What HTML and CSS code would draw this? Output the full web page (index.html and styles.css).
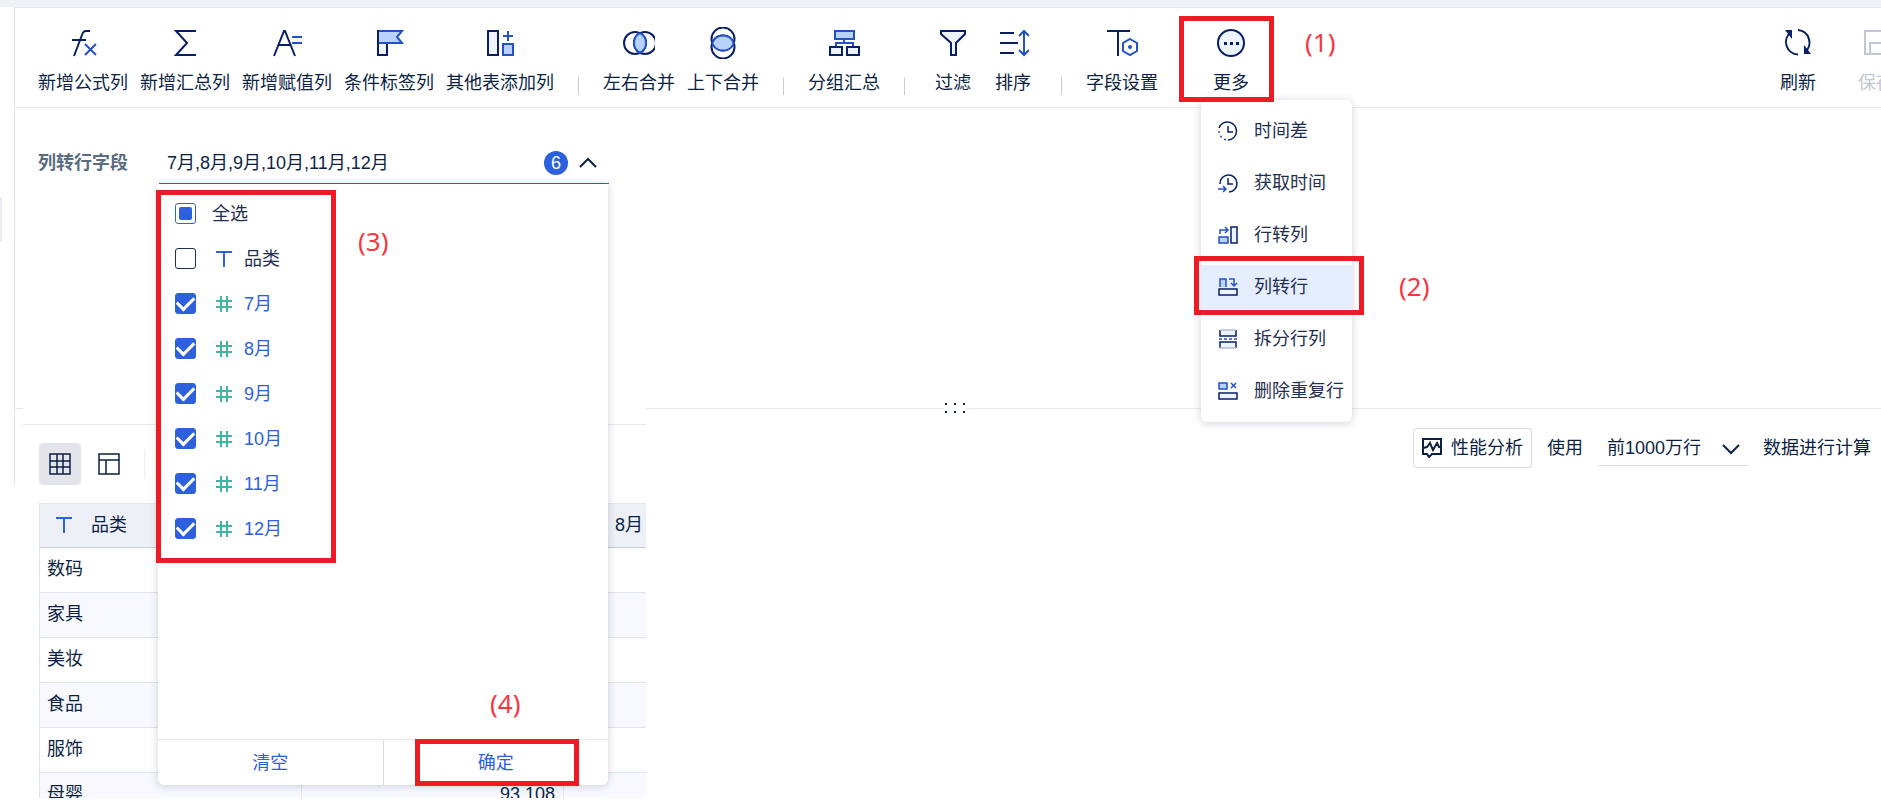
FILE: index.html
```
<!DOCTYPE html>
<html lang="zh-CN">

<head>
    <meta charset="UTF-8" />
    <meta name="viewport" content="width=device-width, initial-scale=1.0" />
    <title>列转行</title>
    <link rel="stylesheet" href="styles.css">
</head>

<body>
    <!-- Shared field type icons -->
    <svg class="sprite" aria-hidden="true">
        <symbol id="type-text" viewBox="0 0 18 18"><path d="M1 2h16M9 2v15" fill="none" stroke="#2d60dc" stroke-width="2" /></symbol>
        <symbol id="type-number" viewBox="0 0 18 18"><path d="M1 6h16M1 12h16M6 1v16M12 1v16" fill="none" stroke="#3fb5a3" stroke-width="2" /></symbol>
    </svg>

    <div class="page">
        <div class="side-handle"></div>
        <header class="toolbar">
            <button class="tool">
                <svg viewBox="0 0 32 32"><path d="M23 4h-4q-3 0-4 4L7 29M5 13h14" /><path class="blue" d="M18 17l11 11M29 17L18 28" /></svg>
                <span>新增公式列</span>
            </button>
            <button class="tool">
                <svg viewBox="0 0 32 32"><path d="M27 4H7l11 12L7 28h20" /></svg>
                <span>新增汇总列</span>
            </button>
            <button class="tool">
                <svg viewBox="0 0 32 32"><path d="M3 29L13 4h1l10 25M7 18h13" /><path class="blue" d="M21 10h10M21 16h10" /></svg>
                <span>新增赋值列</span>
            </button>
            <button class="tool">
                <svg viewBox="0 0 32 32"><path class="pale" d="M5 15v13h9V15" /><path class="blue fill" d="M5 4h24l-5 6 5 6H5z" /><path d="M5 3v25" /></svg>
                <span>条件标签列</span>
            </button>
            <button class="tool">
                <svg viewBox="0 0 32 32"><path class="pale" d="M4 4h10v24H4z" /><path class="blue" d="M24 4v10M19 9h10" /><path class="blue fill" d="M19 17h10v11H19z" /></svg>
                <span>其他表添加列</span>
            </button>
            <i class="sep"></i>
            <button class="tool">
                <svg viewBox="0 0 32 32"><circle cx="12" cy="16" r="11" /><circle cx="22" cy="16" r="11" /><path class="blue fill" d="M17 6.200a11 11 0 0 1 0 19.600a11 11 0 0 1 0-19.600z" /></svg>
                <span>左右合并</span>
            </button>
            <button class="tool">
                <svg viewBox="0 0 32 32"><circle cx="16" cy="12" r="11.500" /><circle cx="16" cy="20" r="11.500" /><path class="blue fill" d="M5.200 16a11.500 11.500 0 0 1 21.600 0a11.500 11.500 0 0 1-21.600 0z" /></svg>
                <span>上下合并</span>
            </button>
            <i class="sep"></i>
            <button class="tool">
                <svg viewBox="0 0 32 32"><path class="blue fill" d="M7 4h19v8H7z" /><path class="blue" d="M16 12v4M8 20v-4h17v4" /><path class="pale" d="M2 20h12v8H2zM19 20h12v8H19z" /></svg>
                <span>分组汇总</span>
            </button>
            <i class="sep"></i>
            <button class="tool">
                <svg viewBox="0 0 32 32"><path class="pale" d="M4 4h24v3l-9 9v12h-5V16L4 7z" /></svg>
                <span>过滤</span>
            </button>
            <button class="tool">
                <svg viewBox="0 0 32 32"><path d="M3 6h14M3 16h18M3 26h14" /><path class="blue" d="M27 4v24M22 9l5-5 5 5M22 23l5 5 5-5" /></svg>
                <span>排序</span>
            </button>
            <i class="sep"></i>
            <button class="tool">
                <svg viewBox="0 0 32 32"><path d="M1 4h23M12 4v25" /><path class="blue" d="M24 12l7 4v8l-7 4-7-4v-8z" /><circle class="blue-dot" cx="24" cy="20" r="2" /></svg>
                <span>字段设置</span>
            </button>
            <i class="sep"></i>

            <div class="more">
                <button class="tool">
                    <svg viewBox="0 0 32 32"><circle class="pale" cx="16" cy="16" r="13" /><path class="solid" d="M9 15h3v3H9zM15 15h3v3h-3zM21 15h3v3h-3z" /></svg>
                    <span>更多</span>
                </button>
                <div class="menu">
                    <button class="menu-item">
                        <svg viewBox="0 0 20 20"><path d="M1 7A9 9 0 1 1 10 19M10 5v6h5" /><path class="blue dots" d="M1 10A9 9 0 0 0 10 19" /></svg>
                        时间差
                    </button>
                    <button class="menu-item">
                        <svg viewBox="0 0 20 20"><path d="M2 11A8.500 8.500 0 1 1 11 19M10 5v6h5" /><path class="blue" d="M0 16h8M5 13l3 3-3 3" /></svg>
                        获取时间
                    </button>
                    <button class="menu-item">
                        <svg viewBox="0 0 20 20"><path class="blue fill" d="M1 12h9v6H1z" /><path class="blue" d="M2 9V5h8M7 2l3 3-3 3" /><path class="pale" d="M13 2h6v16h-6z" /></svg>
                        行转列
                    </button>
                    <button class="menu-item active">
                        <svg viewBox="0 0 20 20"><path class="blue fill" d="M2 10V2h6v8" /><path class="blue" d="M11 2h5v7M13 6l3 3 3-3" /><path class="pale" d="M1 12h18v6H1z" /></svg>
                        列转行
                    </button>
                    <button class="menu-item">
                        <svg viewBox="0 0 20 20"><path class="pale" d="M2 1v6h16V1M2 19v-6h16v6" /><path class="faint" d="M2 1h16M2 19h16" /><path class="blue dash" d="M1 10h18" /></svg>
                        拆分行列
                    </button>
                    <button class="menu-item">
                        <svg viewBox="0 0 20 20"><path class="blue fill" d="M1 2h8v6H1z" /><path class="blue" d="M13 2l5 5M18 2l-5 5" /><path class="pale" d="M1 12h18v6H1z" /></svg>
                        删除重复行
                    </button>
                </div>
                <div class="mark mark-more"></div>
                <div class="mark mark-menu"></div>
                <span class="step step-1">(1)</span>
                <span class="step step-2">(2)</span>
            </div>

            <div class="tools-right">
                <button class="tool">
                    <svg viewBox="0 0 32 32"><path d="M16 3A12.500 12.500 0 0 1 23 25M16 27.500A12.500 12.500 0 0 1 9 5" /><path class="solid" d="M22 18v9h7zM10 12V3H3z" /></svg>
                    <span>刷新</span>
                </button>
                <button class="tool" disabled>
                    <svg viewBox="0 0 32 32"><path d="M5 4h19l4 4v19H5zM10 27V16h13v11" /></svg>
                    <span>保存</span>
                </button>
            </div>
        </header>

        <section class="config">
            <span class="config-label" id="fieldLabel">列转行字段</span>
            <div class="combo">
                <button class="combo-value" aria-labelledby="fieldLabel">
                    <span class="combo-text">7月,8月,9月,10月,11月,12月</span>
                    <span class="badge">6</span>
                    <svg class="chevron" viewBox="0 0 18 18"><path d="M1 13l8-8 8 8" /></svg>
                </button>

                <div class="dropdown">
                    <div class="options">
                        <label class="option all"><input type="checkbox" class="partial"><span>全选</span></label>
                        <label class="option"><input type="checkbox"><svg><use href="#type-text" /></svg><span>品类</span></label>
                        <label class="option"><input type="checkbox" checked><svg><use href="#type-number" /></svg><span>7月</span></label>
                        <label class="option"><input type="checkbox" checked><svg><use href="#type-number" /></svg><span>8月</span></label>
                        <label class="option"><input type="checkbox" checked><svg><use href="#type-number" /></svg><span>9月</span></label>
                        <label class="option"><input type="checkbox" checked><svg><use href="#type-number" /></svg><span>10月</span></label>
                        <label class="option"><input type="checkbox" checked><svg><use href="#type-number" /></svg><span>11月</span></label>
                        <label class="option"><input type="checkbox" checked><svg><use href="#type-number" /></svg><span>12月</span></label>
                    </div>
                    <div class="dropdown-footer">
                        <button>清空</button>
                        <button>确定</button>
                    </div>
                    <div class="mark mark-options"></div>
                    <div class="mark mark-confirm"></div>
                    <span class="step step-3">(3)</span>
                    <span class="step step-4">(4)</span>
                </div>
            </div>
            <svg class="grip" viewBox="0 0 22 12"><path d="M1 1h2v2H1zM10 1h2v2h-2zM19 1h2v2h-2zM1 9h2v2H1zM10 9h2v2h-2zM19 9h2v2h-2z" /></svg>
        </section>

        <main class="result">
            <div class="rail"></div>
            <section class="preview">
                <div class="views">
                    <button class="view active" aria-label="表格">
                        <svg viewBox="0 0 22 22"><path d="M1 1h20v20H1zM1 8h20M1 14h20M8 1v20M14 1v20" /></svg>
                    </button>
                    <button class="view" aria-label="布局">
                        <svg viewBox="0 0 22 22"><path d="M1 1h20v20H1zM1 7h20M8 7v14" /></svg>
                    </button>
                    <i class="view-sep"></i>
                </div>
                <div class="table-wrap">
                    <table>
                        <thead>
                            <tr>
                                <th><span class="th"><svg><use href="#type-text" /></svg>品类</span></th>
                                <th></th>
                                <th><span class="th"><svg><use href="#type-number" /></svg>8月</span></th>
                            </tr>
                        </thead>
                        <tbody>
                            <tr><td>数码</td><td></td><td></td></tr>
                            <tr><td>家具</td><td></td><td></td></tr>
                            <tr><td>美妆</td><td></td><td></td></tr>
                            <tr><td>食品</td><td></td><td></td></tr>
                            <tr><td>服饰</td><td></td><td></td></tr>
                            <tr><td>母婴</td><td class="num">93,108</td><td></td></tr>
                        </tbody>
                    </table>
                </div>
            </section>

            <div class="calc">
                <button class="analyse">
                    <svg viewBox="0 0 20 20"><path d="M1 1h18v15h-9l-3 3-2-3H1zM1 10l4-1 3-4 3 7 4-7 2 4h2" /></svg>
                    性能分析
                </button>
                <label for="rows">使用</label>
                <div class="rows">
                    <select id="rows">
                        <option>前1000万行</option>
                    </select>
                    <svg class="chevron" viewBox="0 0 18 18"><path d="M1 5l8 8 8-8" /></svg>
                </div>
                <span>数据进行计算</span>
            </div>
        </main>
    </div>
</body>

</html>
```
FILE: styles.css
```
* {
    box-sizing: border-box;
    margin: 0;
    padding: 0;
}

body {
    font-family: 'Liberation Sans', 'Noto Sans CJK SC', sans-serif;
    font-size: 18px;
    line-height: 24px;
    color: #0c1f45;
    background: #fff;
    overflow: hidden;
}

button,
select {
    font: inherit;
    color: inherit;
    background: none;
    border: none;
    cursor: pointer;
}

svg {
    display: block;
    flex: none;
    fill: none;
    stroke: #081f66;
    stroke-width: 2;
}

.sprite {
    position: absolute;
    width: 0;
    height: 0;
}

.page {
    position: relative;
    padding-left: 14px;
    border-top: 7px solid #edf0f5;
}

/* collapsed side panel */
.side-handle {
    position: absolute;
    left: 0;
    top: 190px;
    width: 2px;
    height: 45px;
    background: #e9ecf2;
}

/* icon colours */
.blue {
    stroke: #2252c5;
}

.fill {
    fill: #b9d2fb;
}

.pale {
    fill: #eef4fe;
}

.solid {
    fill: #081f66;
    stroke: none;
}

.blue-dot {
    fill: #2252c5;
    stroke: none;
}

.faint {
    stroke: #b4c0d9;
}

.dots {
    stroke-dasharray: 2 3;
}

.dash {
    stroke-dasharray: 3 2;
}

/* Toolbar */
.toolbar {
    display: flex;
    gap: 12px;
    padding: 19px 0 12px 23px;
    border: 1px solid #e5e6ee;
    border-right: none;
}

.tool {
    display: flex;
    flex-direction: column;
    align-items: center;
    gap: 12px;
    min-width: 48px;
    white-space: nowrap;
}

.tool svg {
    width: 32px;
    height: 32px;
}

.tool:disabled {
    color: #c3c7d2;
}

.tool:disabled svg {
    stroke: #c3c7d2;
}

.sep {
    align-self: flex-end;
    width: 1px;
    height: 18px;
    margin: 0 12px;
    background: #c9cdd8;
}

.tools-right {
    display: flex;
    gap: 30px;
    margin-left: auto;
    margin-right: -19px;
}

/* More menu */
.more {
    position: relative;
}

.menu {
    position: absolute;
    z-index: 2;
    left: -6px;
    top: 73px;
    display: flex;
    flex-direction: column;
    gap: 8px;
    width: 151px;
    padding: 9px 0;
    border-radius: 6px;
    background: #fff;
    box-shadow: 0 1px 8px rgba(20, 35, 70, 0.2);
}

.menu-item {
    display: flex;
    align-items: center;
    gap: 16px;
    height: 44px;
    padding-left: 17px;
    color: #1f2f50;
    white-space: nowrap;
}

.menu-item svg {
    width: 20px;
    height: 20px;
    stroke-width: 1.5;
}

.menu-item.active {
    background: #e5eeff;
}

/* Step marks */
.mark {
    position: absolute;
    z-index: 3;
    border: 5px solid #ed1c24;
    pointer-events: none;
}

.mark-more {
    left: -28px;
    top: -11px;
    width: 95px;
    height: 86px;
}

.mark-menu {
    left: -13px;
    top: 229px;
    width: 170px;
    height: 59px;
}

.mark-options {
    left: -2px;
    top: 6px;
    width: 180px;
    height: 373px;
}

.mark-confirm {
    right: 29px;
    bottom: -1px;
    width: 164px;
    height: 47px;
}

.step {
    position: absolute;
    z-index: 3;
    font-family: 'Noto Sans', sans-serif;
    font-size: 26px;
    color: #f5373f;
}

.step-1 {
    left: 98px;
    top: 3px;
}

.step-2 {
    left: 192px;
    top: 247px;
}

.step-3 {
    left: 200px;
    top: 45px;
}

.step-4 {
    left: 332px;
    top: 507px;
}

/* Field selection */
.config {
    position: relative;
    display: flex;
    align-items: flex-start;
    gap: 31px;
    min-height: 301px;
    padding: 35px 0 0 23px;
    border-left: 1px solid #e5e6ee;
    border-bottom: 1px solid #e5e6ee;
}

.config-label {
    line-height: 40px;
    font-weight: bold;
    color: #5b6b82;
}

.combo {
    position: relative;
    width: 450px;
}

.combo-value {
    display: flex;
    align-items: center;
    width: 100%;
    height: 41px;
    padding: 0 12px 0 8px;
    border-bottom: 1px solid #2d60dc;
}

.combo-text {
    flex: 1;
    text-align: left;
}

.badge {
    width: 24px;
    margin-right: 11px;
    border-radius: 12px;
    background: #2d60dc;
    color: #fff;
}

.chevron {
    width: 18px;
    height: 18px;
    stroke: #0c1f45;
}

.dropdown {
    position: absolute;
    z-index: 2;
    top: 41px;
    left: -1px;
    width: 100%;
    border-radius: 0 0 6px 6px;
    background: #fff;
    box-shadow: 0 1px 8px rgba(20, 35, 70, 0.2);
}

.options {
    min-height: 555px;
    padding: 7px 0 0 17px;
}

.option {
    display: flex;
    align-items: center;
    gap: 19px;
    height: 45px;
}

.option span {
    margin-left: -8px;
    color: #2d60dc;
}

.option svg {
    width: 18px;
    height: 18px;
}

.option input {
    appearance: none;
    display: grid;
    place-items: center;
    width: 21px;
    height: 21px;
    border: 1px solid #1f2f50;
    border-radius: 3px;
}

.option input:checked {
    border-color: #2d60dc;
    background: #2d60dc;
}

.option input:checked::after {
    content: '';
    width: 14px;
    height: 8px;
    margin-bottom: 4px;
    border: solid #fff;
    border-width: 0 0 3px 3px;
    transform: rotate(-45deg);
}

.option input.partial {
    border-color: #2d60dc;
}

.option input.partial::after {
    content: '';
    width: 13px;
    height: 13px;
    border-radius: 2px;
    background: #2d60dc;
}

.option.all span {
    margin-left: -3px;
}

.option.all span,
.option input:not(:checked) ~ span {
    color: #1f2f50;
}

.dropdown-footer {
    display: flex;
    border-top: 1px solid #e5e6ee;
}

.dropdown-footer button {
    flex: 1;
    height: 45px;
    color: #2d60dc;
}

.dropdown-footer button + button {
    border-left: 1px solid #d9dce3;
}

.grip {
    position: absolute;
    left: 50%;
    bottom: -6px;
    width: 22px;
    height: 12px;
    margin-left: -4px;
    background: #fff;
    fill: #0c1f45;
    stroke: none;
}

/* Result */
.result {
    display: flex;
    align-items: flex-start;
}

.rail {
    width: 9px;
    height: 77px;
    border-left: 1px solid #e5e6ee;
}

.preview {
    position: relative;
    flex: 0 0 623px;
    margin-top: -1px;
    padding: 16px 0 0;
    background: #fff;
}

.views {
    display: flex;
    align-items: center;
    gap: 7px;
    padding: 18px 16px;
    border-top: 1px solid #e5e6ee;
}

.view {
    display: grid;
    place-items: center;
    width: 42px;
    height: 42px;
    border-radius: 4px;
}

.view.active {
    background: #e3e5ea;
}

.view svg {
    width: 22px;
    height: 22px;
    stroke: #0c1f45;
    stroke-width: 1.5;
}

.view-sep {
    width: 1px;
    height: 30px;
    margin-left: 7px;
    background: #eceef3;
}

.table-wrap {
    height: 295px;
    margin-left: 16px;
    overflow: hidden;
}

table {
    width: 100%;
    table-layout: fixed;
    border-collapse: separate;
    border-spacing: 0;
    border-left: 1px solid #e0e4ec;
}

th,
td {
    width: 262px;
    height: 45px;
    padding: 0 8px 2px 7px;
    border-right: 1px solid #e0e4ec;
    border-bottom: 1px solid #e0e4ec;
    text-align: left;
    font-weight: normal;
}

th:last-child,
td:last-child {
    width: auto;
    border-right: none;
}

th {
    padding-left: 15px;
    border-top: 1px solid #e0e4ec;
    border-bottom-color: #c9cdd4;
    background: #edf0f6;
}

tbody tr:nth-child(even) {
    background: #f7f9fe;
}

.num {
    text-align: right;
}

.th {
    display: flex;
    align-items: center;
    gap: 18px;
    white-space: nowrap;
}

.th svg {
    width: 18px;
    height: 18px;
}

/* Row limit */
.calc {
    display: flex;
    align-items: center;
    gap: 15px;
    margin-left: auto;
    padding: 19px 10px 0 0;
    white-space: nowrap;
}

.analyse {
    display: flex;
    align-items: center;
    gap: 9px;
    height: 40px;
    padding: 0 8px;
    border: 1px solid #d9dce3;
    border-radius: 3px;
}

.analyse svg {
    width: 20px;
    height: 20px;
    stroke: #0c1f45;
}

.rows {
    position: relative;
}

.rows select {
    appearance: none;
    width: 150px;
    height: 36px;
    padding-left: 9px;
    border-bottom: 1px solid #d9dce3;
}

.rows .chevron {
    position: absolute;
    right: 8px;
    top: 10px;
    pointer-events: none;
}
```
